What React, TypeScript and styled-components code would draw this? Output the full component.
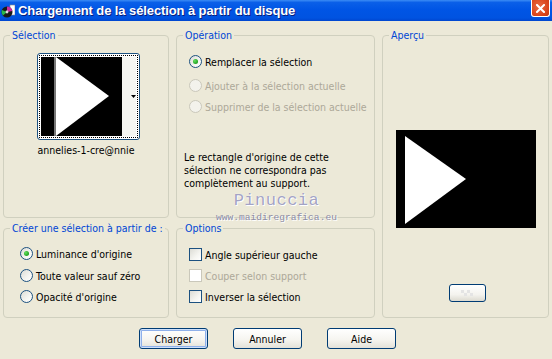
import React from "react";
import styled, { createGlobalStyle } from "styled-components";

const GlobalStyle = createGlobalStyle`
  html, body { margin: 0; padding: 0; background: #ece9d8; }
  body { font-family: "DejaVu Sans Condensed", "DejaVu Sans", Verdana, sans-serif; font-size: 10.5px; color: #000; }
`;

const Window = styled.div`
  position: relative;
  width: 552px;
  height: 359px;
  background: #ece9d8;
  overflow: hidden;
`;

const TitleBar = styled.div`
  height: 21px;
  display: flex;
  align-items: center;
  background: linear-gradient(to bottom, #3b8cf5 0%, #0a5fe8 12%, #0055e5 45%, #0053e1 85%, #0046cf 100%);
  padding-left: 1px;
`;

const TitleText = styled.span`
  margin-left: 3px;
  color: #fff;
  font-family: "Liberation Sans", Arial, sans-serif;
  font-weight: bold;
  font-size: 13px;
  letter-spacing: -0.1px;
  text-shadow: 1px 1px 0 #0a1e7a;
  flex: 1;
`;

const CloseButton = styled.div`
  align-self: flex-start;
  width: 19px;
  height: 17px;
  margin-right: 2px;
  box-sizing: border-box;
  border: 1px solid #fff;
  border-top: none;
  border-radius: 0 0 3px 3px;
  background: radial-gradient(circle at 40% 40%, #e96a44, #d8431a 70%, #c23a14);
  display: flex;
  align-items: center;
  justify-content: center;
`;

const Body = styled.div`
  display: grid;
  grid-template-columns: 166px 199px 167px;
  grid-template-rows: 190px 97px;
  column-gap: 7px;
  row-gap: 3px;
  padding: 7px 0 0 3px;
`;

const Group = styled.fieldset<{ $span?: boolean }>`
  margin: 0;
  padding: 0;
  min-width: 0;
  border: 1px solid #d0d0bf;
  border-radius: 4px;
  grid-row: ${(p) => (p.$span ? "1 / span 2" : "auto")};
  grid-column: ${(p) => (p.$span ? "3" : "auto")};
`;

const Legend = styled.legend`
  margin-left: 6px;
  padding: 0 2px;
  line-height: 14px;
  color: #0046d5;
  white-space: nowrap;
`;

const SelectionBody = styled.div`
  display: flex;
  flex-direction: column;
  align-items: center;
  padding: 11px 0 0 4px;
`;

const ThumbButton = styled.div`
  width: 103px;
  height: 87px;
  box-sizing: border-box;
  border: 1px solid #1c5180;
  border-radius: 3px;
  padding: 1px;
  background: #fff;
`;

const FocusRing = styled.div`
  height: 100%;
  box-sizing: border-box;
  border: 1px dotted #000;
  padding: 1px;
  display: flex;
  align-items: stretch;
`;

const ThumbStrip = styled.div`
  width: 9px;
  background: #f6f6f2;
`;

const ThumbArrow = styled.div`
  flex: 1;
  display: flex;
  align-items: center;
  justify-content: center;
  background: #f6f6f2;
`;

const Caption = styled.div`
  margin-top: 3px;
  line-height: 14px;
  margin-right: 4px;
`;

const GroupBody = styled.div<{ $pt: number }>`
  display: flex;
  flex-direction: column;
  padding: ${(p) => p.$pt}px 0 0 12px;
`;

const Row = styled.label<{ $mt?: number; $disabled?: boolean }>`
  display: flex;
  align-items: center;
  gap: 3px;
  height: 15px;
  margin-top: ${(p) => p.$mt ?? 0}px;
  color: ${(p) => (p.$disabled ? "#aca899" : "#000")};
  white-space: nowrap;
`;

const Radio = styled.span<{ $checked?: boolean; $disabled?: boolean }>`
  width: 13px;
  height: 13px;
  box-sizing: border-box;
  border-radius: 50%;
  flex-shrink: 0;
  border: 1px solid ${(p) => (p.$disabled ? "#cac8bb" : "#1c5180")};
  background: ${(p) =>
    p.$disabled ? "#f3f2ec" : "linear-gradient(135deg, #dcdcd5 0%, #f5f5f1 60%, #ffffff 100%)"};
  display: flex;
  align-items: center;
  justify-content: center;

  &::after {
    content: "";
    display: ${(p) => (p.$checked ? "block" : "none")};
    width: 5px;
    height: 5px;
    border-radius: 50%;
    background: radial-gradient(circle at 35% 35%, #62e05d, #21a121 70%);
  }
`;

const Check = styled.span<{ $disabled?: boolean }>`
  width: 13px;
  height: 13px;
  box-sizing: border-box;
  flex-shrink: 0;
  border: 1px solid ${(p) => (p.$disabled ? "#cac8bb" : "#1c5180")};
  background: ${(p) =>
    p.$disabled ? "#fff" : "linear-gradient(135deg, #dcdcd5 0%, #f5f5f1 60%, #ffffff 100%)"};
`;

const Note = styled.div`
  margin: 37px 0 0 -5px;
  line-height: 13px;
`;

const PreviewBody = styled.div`
  display: flex;
  flex-direction: column;
  align-items: center;
  padding-top: 88px;
`;

const PreviewImage = styled.div`
  width: 140px;
  height: 98px;
  background: #000;
  margin-left: 1px;
`;

const SmallButton = styled.div`
  margin: 56px 0 0 3px;
  width: 37px;
  height: 18px;
  box-sizing: border-box;
  border: 1px solid #003c74;
  border-radius: 3px;
  background: linear-gradient(to bottom, #ffffff 0%, #f4f3ee 60%, #dcdad0 100%);
  display: flex;
  align-items: center;
  justify-content: center;
`;

const ButtonBar = styled.div`
  display: flex;
  gap: 25px;
  padding: 10px 0 0 139px;
`;

const PushButton = styled.button<{ $default?: boolean }>`
  width: 69px;
  height: 21px;
  box-sizing: border-box;
  border: 1px solid #003c74;
  border-radius: 3px;
  padding: 0;
  font-family: "DejaVu Sans Condensed", "DejaVu Sans", Verdana, sans-serif;
  font-size: 10.5px;
  color: #000;
  background: linear-gradient(to bottom, #ffffff 0%, #f6f5f0 55%, #e3e1d8 100%);
  box-shadow: ${(p) =>
    p.$default ? "inset 0 0 0 1px #cee0fb, inset 0 0 0 2px #8fb0ea" : "none"};
`;

const Watermark = styled.div`
  position: absolute;
  left: 216px;
  top: 190px;
  display: flex;
  flex-direction: column;
  align-items: center;
  font-family: "Liberation Mono", "DejaVu Sans Mono", monospace;
  pointer-events: none;
`;

const WatermarkName = styled.span`
  font-size: 17px;
  line-height: 22px;
  color: #a3a3c4;
  text-shadow: 0 0 1px #fff, 1px 1px 0 #fff;
  letter-spacing: 0.5px;
`;

const WatermarkSite = styled.span`
  font-size: 9.6px;
  line-height: 11px;
  color: #8c8ca6;
  text-shadow: 1px 1px 0 #fff;
`;

const AppIcon = () => (
  <svg width="14" height="14" viewBox="0 0 14 14">
    <rect x="9" y="1" width="5" height="10" fill="#fff" stroke="#888" strokeWidth="0.6" />
    <circle cx="6" cy="8" r="5.5" fill="#1a1a1a" />
    <path d="M6 8 L6 2.5 A5.5 5.5 0 0 1 11.3 7 Z" fill="#d02aa0" />
    <path d="M6 8 L2 11.5 A5.5 5.5 0 0 1 1 6 Z" fill="#2ab84a" />
    <circle cx="6" cy="8" r="1.4" fill="#ddd" />
  </svg>
);

const CloseIcon = () => (
  <svg width="9" height="9" viewBox="0 0 9 9">
    <path d="M1 1 L8 8 M8 1 L1 8" stroke="#fff" strokeWidth="2" strokeLinecap="square" />
  </svg>
);

const ThumbImage = () => (
  <svg width="81" height="79" viewBox="0 0 81 79" style={{ display: "block" }}>
    <rect width="81" height="79" fill="#000" />
    <rect x="13" y="0" width="2" height="79" fill="#777" />
    <polygon points="15,0 68,39 15,79" fill="#fff" />
  </svg>
);

const DropArrow = () => (
  <svg width="5" height="3" viewBox="0 0 5 3">
    <polygon points="0,0 5,0 2.5,3" fill="#000" />
  </svg>
);

const PreviewTriangle = () => (
  <svg width="140" height="98" viewBox="0 0 140 98" style={{ display: "block" }}>
    <polygon points="9,6 70,49 9,94" fill="#fff" />
  </svg>
);

const GridIcon = () => (
  <svg width="14" height="9" viewBox="0 0 14 9">
    <rect x="1" y="1" width="3" height="3" fill="#e4e4e4" />
    <rect x="7" y="1" width="3" height="3" fill="#e4e4e4" />
    <rect x="4" y="4" width="3" height="3" fill="#e4e4e4" />
    <rect x="10" y="4" width="3" height="3" fill="#e4e4e4" />
  </svg>
);

export default function App() {
  return (
    <Window>
      <GlobalStyle />
      <TitleBar>
        <AppIcon />
        <TitleText>Chargement de la sélection à partir du disque</TitleText>
        <CloseButton>
          <CloseIcon />
        </CloseButton>
      </TitleBar>

      <Body>
        <Group>
          <Legend>Sélection</Legend>
          <SelectionBody>
            <ThumbButton>
              <FocusRing>
                <ThumbImage />
                <ThumbStrip />
                <ThumbArrow>
                  <DropArrow />
                </ThumbArrow>
              </FocusRing>
            </ThumbButton>
            <Caption>annelies-1-cre@nnie</Caption>
          </SelectionBody>
        </Group>

        <Group>
          <Legend>Opération</Legend>
          <GroupBody $pt={12}>
            <Row>
              <Radio $checked />
              Remplacer la sélection
            </Row>
            <Row $mt={9} $disabled>
              <Radio $disabled />
              Ajouter à la sélection actuelle
            </Row>
            <Row $mt={6} $disabled>
              <Radio $disabled />
              Supprimer de la sélection actuelle
            </Row>
            <Note>
              Le rectangle d'origine de cette
              <br />
              sélection ne correspondra pas
              <br />
              complètement au support.
            </Note>
          </GroupBody>
        </Group>

        <Group $span>
          <Legend>Aperçu</Legend>
          <PreviewBody>
            <PreviewImage>
              <PreviewTriangle />
            </PreviewImage>
            <SmallButton>
              <GridIcon />
            </SmallButton>
          </PreviewBody>
        </Group>

        <Group>
          <Legend>Créer une sélection à partir de :</Legend>
          <GroupBody $pt={11}>
            <Row style={{ marginLeft: 4 }}>
              <Radio $checked />
              Luminance d'origine
            </Row>
            <Row $mt={7} style={{ marginLeft: 4 }}>
              <Radio />
              Toute valeur sauf zéro
            </Row>
            <Row $mt={6} style={{ marginLeft: 4 }}>
              <Radio />
              Opacité d'origine
            </Row>
          </GroupBody>
        </Group>

        <Group>
          <Legend>Options</Legend>
          <GroupBody $pt={12}>
            <Row>
              <Check />
              Angle supérieur gauche
            </Row>
            <Row $mt={6} $disabled>
              <Check $disabled />
              Couper selon support
            </Row>
            <Row $mt={6}>
              <Check />
              Inverser la sélection
            </Row>
          </GroupBody>
        </Group>
      </Body>

      <ButtonBar>
        <PushButton $default>Charger</PushButton>
        <PushButton>Annuler</PushButton>
        <PushButton>Aide</PushButton>
      </ButtonBar>

      <Watermark>
        <WatermarkName>Pinuccia</WatermarkName>
        <WatermarkSite>www.maidiregrafica.eu</WatermarkSite>
      </Watermark>
    </Window>
  );
}
